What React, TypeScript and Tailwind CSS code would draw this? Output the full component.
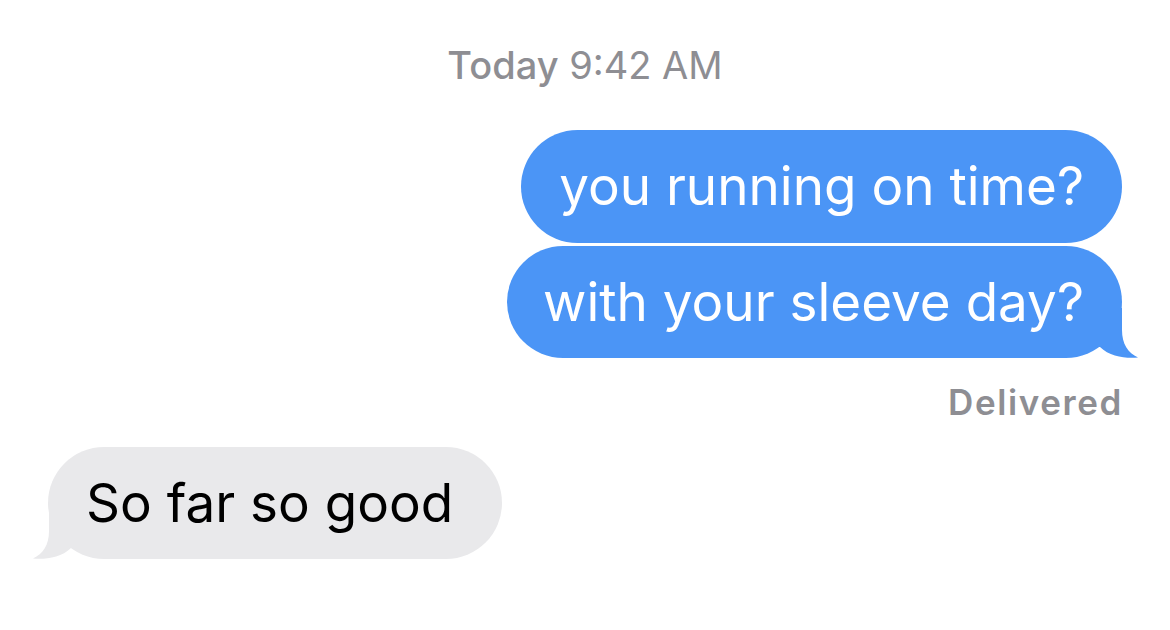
import React from 'react';

const Tail: React.FC<{ color: string; mirrored?: boolean }> = ({ color, mirrored }) => (
  <svg
    width="44"
    height="50"
    viewBox="0 0 44 50"
    className={mirrored ? 'absolute bottom-0 left-[-15px] -scale-x-100' : 'absolute bottom-0 right-[-16px]'}
  >
    <path d="M0 0 L28 0 L28 22 C28 36 34 45 44 49.5 C32 50.5 16 49 6 39 L0 39 Z" fill={color} />
  </svg>
);

const App: React.FC = () => {
  return (
    <div className="w-[1170px] h-[630px] bg-white flex flex-col px-12 font-['Inter',sans-serif] overflow-hidden">
      <div className="mt-[46px] text-center text-[38px] leading-none text-[#8e8e93]">
        <span className="font-medium">Today</span> 9:42 AM
      </div>

      <div className="mt-[46px] flex flex-col items-end gap-[3px]">
        <div className="h-[113px] rounded-full bg-[#4b95f6] px-[38px] flex items-center text-white text-[53px] leading-none">
          you running on time?
        </div>
        <div className="relative h-[112px] rounded-full bg-[#4b95f6] pl-[36px] pr-[38px] flex items-center text-white text-[53px] leading-none">
          with your sleeve day?
          <Tail color="#4b95f6" />
        </div>
      </div>

      <div className="mt-[27px] text-right text-[35px] leading-none font-semibold tracking-[1.6px] text-[#8e8e93] mr-[-1px]">
        Delivered
      </div>

      <div className="mt-[27px] self-start relative h-[112px] rounded-full bg-[#e9e9eb] pl-[38px] pr-[49px] flex items-center text-black text-[53px] leading-none">
        So far so good
        <Tail color="#e9e9eb" mirrored />
      </div>
    </div>
  );
};

export default App;
